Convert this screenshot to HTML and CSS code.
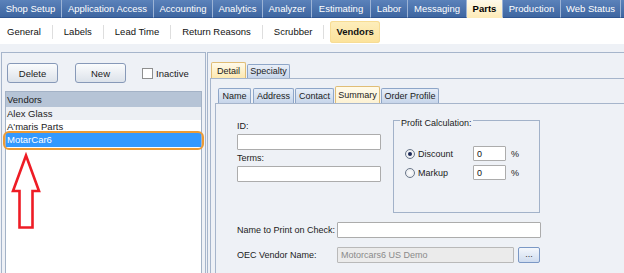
FILE: index.html
```html
<!DOCTYPE html>
<html>
<head>
<meta charset="utf-8">
<link rel="stylesheet" href="styles.css">
</head>
<body>
<div class="topnav">
  <div class="tab">Shop Setup</div>
  <div class="tab">Application Access</div>
  <div class="tab">Accounting</div>
  <div class="tab">Analytics</div>
  <div class="tab">Analyzer</div>
  <div class="tab">Estimating</div>
  <div class="tab">Labor</div>
  <div class="tab">Messaging</div>
  <div class="tab active">Parts</div>
  <div class="tab">Production</div>
  <div class="tab">Web Status</div>
  <div class="tab fill"></div>
</div>
<div class="subnav">
  <span class="sub first">General</span><span class="sep"></span>
  <span class="sub">Labels</span><span class="sep"></span>
  <span class="sub">Lead Time</span><span class="sep"></span>
  <span class="sub">Return Reasons</span><span class="sep"></span>
  <span class="sub">Scrubber</span><span class="sep"></span>
  <span class="sub pill">Vendors</span>
</div>
<div class="main">
  <section class="left">
    <div class="toolbar">
      <button class="btn">Delete</button>
      <button class="btn btn-new">New</button>
      <label class="chk"><span class="chk-box"></span>Inactive</label>
    </div>
    <div class="list">
      <div class="list-head">Vendors</div>
      <div class="row alt">Alex Glass</div>
      <div class="row">A'maris Parts</div>
      <div class="row sel">MotarCar6</div>
    </div>
    <div class="highlight"></div>
    <svg class="arrow" width="32" height="80" viewBox="0 0 32 80">
      <path d="M16 3.5 L3 39 L9.5 39 L9.5 75.5 L22.5 75.5 L22.5 39 L29 39 Z" fill="#fff" stroke="#ee1c25" stroke-width="2.6" stroke-linejoin="miter"/>
    </svg>
  </section>
  <section class="right">
    <div class="tabs1">
      <div class="t1 t1-on">Detail</div>
      <div class="t1 t1-spec">Specialty</div>
    </div>
    <div class="detail">
      <div class="tabs2">
        <div class="t2 w-name">Name</div>
        <div class="t2 w-addr">Address</div>
        <div class="t2 w-cont">Contact</div>
        <div class="t2 t2-on w-summ">Summary</div>
        <div class="t2 w-ord">Order Profile</div>
      </div>
      <div class="summary">
        <div class="top-row">
          <div class="col">
            <div class="lbl">ID:</div>
            <div class="inp col-inp"></div>
            <div class="lbl">Terms:</div>
            <div class="inp col-inp"></div>
          </div>
          <div class="group">
            <span class="legend">Profit Calculation:</span>
            <div class="opt opt-first"><span class="radio on"></span><span class="opt-l">Discount</span><span class="inp num">0</span><span class="pct">%</span></div>
            <div class="opt"><span class="radio"></span><span class="opt-l">Markup</span><span class="inp num">0</span><span class="pct">%</span></div>
          </div>
        </div>
        <div class="frow"><span class="flbl">Name to Print on Check:</span><span class="inp wide"></span></div>
        <div class="frow"><span class="flbl">OEC Vendor Name:</span><span class="inp dis">Motorcars6 US Demo</span><span class="dots">...</span></div>
      </div>
    </div>
  </section>
</div>
</body>
</html>
```
FILE: styles.css
```css
html, body {
  margin: 0;
  padding: 0;
}
body {
  width: 624px;
  height: 273px;
  overflow: hidden;
  background: #eef1f6;
  font-family: "Liberation Sans", Arial, sans-serif;
  font-size: 9px;
  color: #1b1b1b;
}

/* top navigation */
.topnav {
  display: grid;
  grid-template-columns: 62px 92px 59px 50px 49px 59px 37px 59px 36px 58px 60px 1fr;
  height: 18px;
  background: #3f67a3;
}
.tab {
  color: #fff;
  font-size: 9.5px;
  line-height: 17px;
  text-align: center;
  white-space: nowrap;
  background: linear-gradient(#5b82ba, #3e66a1);
  border-right: 1px solid #9cb3d5;
  border-bottom: 1px solid #2f5590;
}
.tab.active {
  background: linear-gradient(#fffaea, #fdebb9);
  color: #000;
  font-weight: bold;
  border-bottom-color: #fdebb9;
}
.tab.fill {
  border-right: none;
}

/* sub navigation */
.subnav {
  display: flex;
  align-items: flex-start;
  box-sizing: border-box;
  height: 26px;
  padding: 3px 0 0 7px;
  background: #fff;
  font-size: 9.5px;
  color: #111;
}
.sub {
  padding: 0 11px;
  line-height: 22px;
  white-space: nowrap;
}
.sub.first {
  padding-left: 0;
}
.sep {
  width: 1px;
  height: 14px;
  margin-top: 4px;
  background: #dedede;
}
.pill {
  margin-left: 6px;
  padding: 0 6px;
  font-weight: bold;
  border-radius: 3px;
  background: linear-gradient(#fdeebd, #fce29a);
  box-shadow: inset 0 0 0 1px #f7dc94;
}

/* main */
.main {
  display: flex;
  align-items: flex-start;
  height: 229px;
  box-sizing: border-box;
  padding-top: 8px;
  overflow: hidden;
}
.left {
  position: relative;
  flex: none;
  box-sizing: border-box;
  width: 205px;
  height: 221px;
  margin-left: 1px;
  padding: 10px 0 0 3px;
  border: 1px solid #a6b5cb;
  border-bottom: none;
}
.toolbar {
  display: flex;
  align-items: center;
  height: 20px;
  margin-left: 2px;
}
.btn {
  box-sizing: border-box;
  width: 51px;
  height: 20px;
  padding: 0;
  border: 1px solid #8799b8;
  border-radius: 3px;
  background: linear-gradient(#fbfcfd, #dce2ea);
  font-family: "Liberation Sans", Arial, sans-serif;
  font-size: 9.5px;
  color: #1b1b1b;
}
.btn-new {
  margin-left: 17px;
}
.chk {
  display: flex;
  align-items: center;
  margin-left: 16px;
  font-size: 9.5px;
}
.chk-box {
  box-sizing: border-box;
  width: 11px;
  height: 11px;
  margin-right: 3px;
  border: 1px solid #8e8f8f;
  background: #fff;
}
.list {
  box-sizing: border-box;
  width: 197px;
  height: 182px;
  margin-top: 8px;
  border: 1px solid #a3b2c6;
  border-bottom: none;
  background: #fff;
  font-size: 9.5px;
}
.list-head {
  height: 15px;
  line-height: 15px;
  padding-left: 1px;
  background: #b6c4d6;
}
.row {
  height: 13px;
  line-height: 13px;
  padding-left: 1px;
}
.row.alt {
  background: #edf0f4;
}
.row.sel {
  height: 14px;
  line-height: 14px;
  background: #3399ff;
  color: #fff;
}
.highlight {
  position: absolute;
  left: 1px;
  top: 78px;
  box-sizing: border-box;
  width: 201px;
  height: 19px;
  border: 2px solid #ec9b35;
  border-radius: 6px;
}
.arrow {
  position: absolute;
  left: 8px;
  top: 99px;
}

/* right panel */
.right {
  flex: none;
  box-sizing: border-box;
  width: 430px;
  height: 221px;
  margin-left: 1px;
  padding-top: 9px;
  border-top: 1px solid #a6b5cb;
  border-left: 1px solid #a6b5cb;
}
.tabs1 {
  display: flex;
  align-items: flex-end;
  height: 16px;
  padding-left: 3px;
}
.t1 {
  box-sizing: border-box;
  height: 14px;
  line-height: 13px;
  text-align: center;
  border: 1px solid #8ea6c8;
  border-bottom: none;
  border-radius: 2px 2px 0 0;
  background: linear-gradient(#e9eff8, #c8d6eb);
}
.t1-on {
  width: 35px;
  height: 16px;
  line-height: 16px;
  border-color: #e0bd76;
  background: linear-gradient(#fffaea, #fde8b0);
}
.t1-spec {
  width: 43px;
  margin-left: 1px;
}
.detail {
  box-sizing: border-box;
  height: 195px;
  margin-left: 2px;
  padding: 7px 0 0 4px;
  border-top: 1px solid #a6b5cb;
  border-left: 1px solid #a6b5cb;
}
.tabs2 {
  display: flex;
  align-items: flex-end;
  height: 17px;
  padding-left: 3px;
}
.t2 {
  box-sizing: border-box;
  height: 15px;
  line-height: 15px;
  margin-left: 1px;
  text-align: center;
  border: 1px solid #8ea6c8;
  border-bottom: none;
  border-radius: 2px 2px 0 0;
  background: linear-gradient(#e7eef8, #c6d5ea);
}
.t2-on {
  height: 17px;
  line-height: 16px;
  border-color: #e0bd76;
  background: linear-gradient(#fffaea, #fdf2d4);
}
.w-name { width: 33px; margin-left: 0; }
.w-addr { width: 41px; margin-left: 2px; }
.w-cont { width: 39px; }
.w-summ { width: 45px; }
.w-ord { width: 58px; }

.summary {
  box-sizing: border-box;
  height: 170px;
  padding: 16px 0 0 21px;
  border-top: 1px solid #a6b5cb;
  border-left: 1px solid #a6b5cb;
}
.top-row {
  display: flex;
  align-items: flex-start;
}
.col {
  width: 144px;
}
.lbl {
  height: 12px;
  line-height: 12px;
  margin-bottom: 2px;
}
.col-inp {
  margin-bottom: 2px;
}
.inp {
  display: block;
  box-sizing: border-box;
  height: 16px;
  line-height: 14px;
  padding-left: 3px;
  border: 1px solid #acacac;
  border-radius: 1px;
  background: #fff;
  color: #111;
}
.col-inp {
  width: 144px;
}
.group {
  box-sizing: border-box;
  width: 147px;
  height: 93px;
  margin-left: 12px;
  border: 1px solid #a2b2c9;
}
.legend {
  display: inline-block;
  margin: -4px 0 0 6px;
  padding: 0 1px;
  line-height: 12px;
  background: #eef1f6;
  vertical-align: top;
}
.opt {
  display: flex;
  align-items: center;
  height: 15px;
  margin-top: 4px;
  padding-left: 11px;
}
.opt-first {
  margin-top: 15px;
}
.radio {
  position: relative;
  box-sizing: border-box;
  width: 10px;
  height: 10px;
  border: 1px solid #6a7789;
  border-radius: 50%;
  background: radial-gradient(#ffffff, #e1e4e9);
}
.radio.on::after {
  content: "";
  position: absolute;
  left: 2px;
  top: 2px;
  width: 4px;
  height: 4px;
  border-radius: 50%;
  background: #1b2957;
}
.opt-l {
  width: 55px;
  margin-left: 3px;
}
.num {
  width: 33px;
  height: 15px;
}
.pct {
  margin-left: 5px;
}
.frow {
  display: flex;
  align-items: center;
  height: 16px;
  margin-top: 9px;
}
.flbl {
  width: 100px;
  white-space: nowrap;
}
.wide {
  width: 204px;
}
.dis {
  width: 177px;
  background: #ebebeb;
  color: #8a8a8a;
  border-color: #b9b9b9;
}
.dots {
  box-sizing: border-box;
  width: 22px;
  height: 16px;
  margin-left: 4px;
  line-height: 12px;
  text-align: center;
  border: 1px solid #7b98c5;
  border-radius: 2px;
  background: linear-gradient(#f4f7fc, #cfdcef);
  color: #333;
}
```
